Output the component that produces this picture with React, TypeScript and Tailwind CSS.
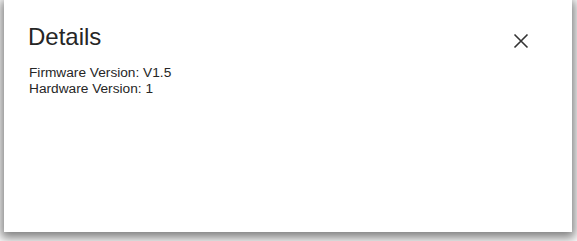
import React from "react";

export default function App() {
  return (
    <div className="w-[577px] h-[241px] bg-white overflow-hidden pl-[4px]" style={{ fontFamily: '"Liberation Sans", Arial, sans-serif' }}>
      <div className="w-[568px] h-[232px] bg-white shadow-[0_3px_10px_3px_rgba(0,0,0,0.5)] relative">
        <div className="flex items-start justify-between pl-[24px] pr-[39px] pt-[23px]">
          <h2 className="text-[24px] leading-[28px] text-[#262626]">Details</h2>
          <button className="w-[24px] h-[24px] mt-[6px] flex items-center justify-center text-[#333]">
            <svg width="24" height="24" viewBox="0 0 24 24" fill="none" stroke="currentColor" strokeWidth="1.6">
              <path d="M5.5 5.5 18.5 18.5M18.5 5.5 5.5 18.5" />
            </svg>
          </button>
        </div>
        <div className="pl-[25px] pt-[12px] text-[13.7px] leading-[16px] text-[#262626]">
          <div>Firmware Version: V1.5</div>
          <div>Hardware Version: 1</div>
        </div>
      </div>
    </div>
  );
}
